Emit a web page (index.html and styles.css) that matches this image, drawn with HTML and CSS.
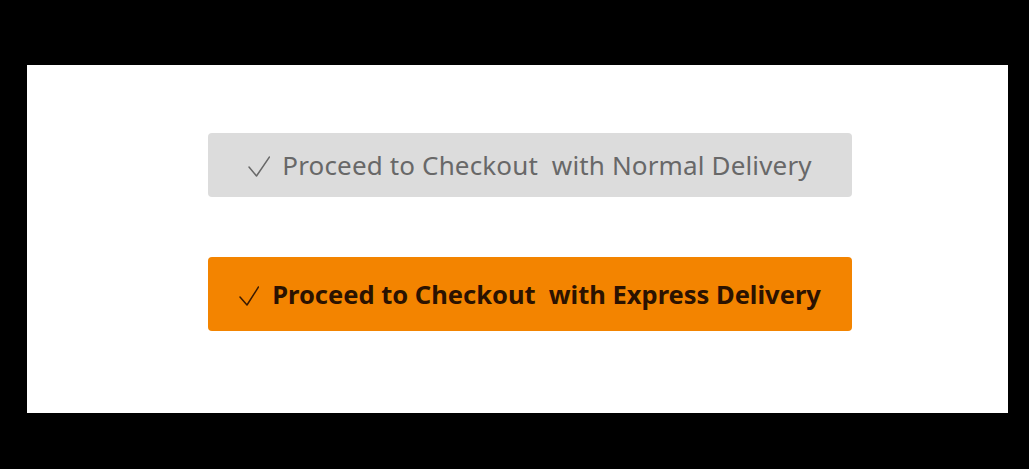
FILE: index.html
```html
<!DOCTYPE html>
<html>
<head>
<meta charset="utf-8">
<link rel="stylesheet" href="styles.css">
</head>
<body>
<div class="panel">
  <button class="btn btn-normal"><svg class="check" width="22" height="22" viewBox="0 0 22 22"><path d="M1 11 L8.5 20 L21.5 1" fill="none" stroke="currentColor" stroke-width="1.5" stroke-linecap="round" stroke-linejoin="round"/></svg><span>Proceed to Checkout&nbsp; with Normal Delivery</span></button>
  <button class="btn btn-express"><svg class="check" width="20" height="20" viewBox="0 0 20 20"><path d="M1 11 L8 19 L19.5 1" fill="none" stroke="currentColor" stroke-width="1.5" stroke-linecap="round" stroke-linejoin="round"/></svg><span>Proceed to Checkout&nbsp; with Express Delivery</span></button>
</div>
</body>
</html>
```
FILE: styles.css
```css
html, body {
  margin: 0;
  padding: 0;
  background: #000;
}
body {
  width: 1029px;
  height: 469px;
  padding-top: 65px;
  padding-left: 27px;
  box-sizing: border-box;
}
.panel {
  width: 981px;
  height: 348px;
  background: #fff;
  box-sizing: border-box;
  padding: 68px 0 0 181px;
  display: flex;
  flex-direction: column;
  gap: 60px;
}
.btn {
  width: 644px;
  border: none;
  border-radius: 4px;
  font-family: "Noto Sans", sans-serif;
  display: flex;
  align-items: center;
  justify-content: center;
  padding: 0;
  white-space: nowrap;
}
.btn-normal {
  height: 64px;
  background: #dcdcdc;
  color: #686868;
  font-size: 26px;
  letter-spacing: 0.15px;
  gap: 12px;
}
.btn-normal .check {
  margin-top: 4px;
}
.btn-express {
  height: 74px;
  background: #f38400;
  color: #2b1200;
  font-weight: bold;
  font-size: 25.5px;
  gap: 13px;
}
.btn-express .check {
  margin-top: 4px;
  color: #3a1a00;
}
```
